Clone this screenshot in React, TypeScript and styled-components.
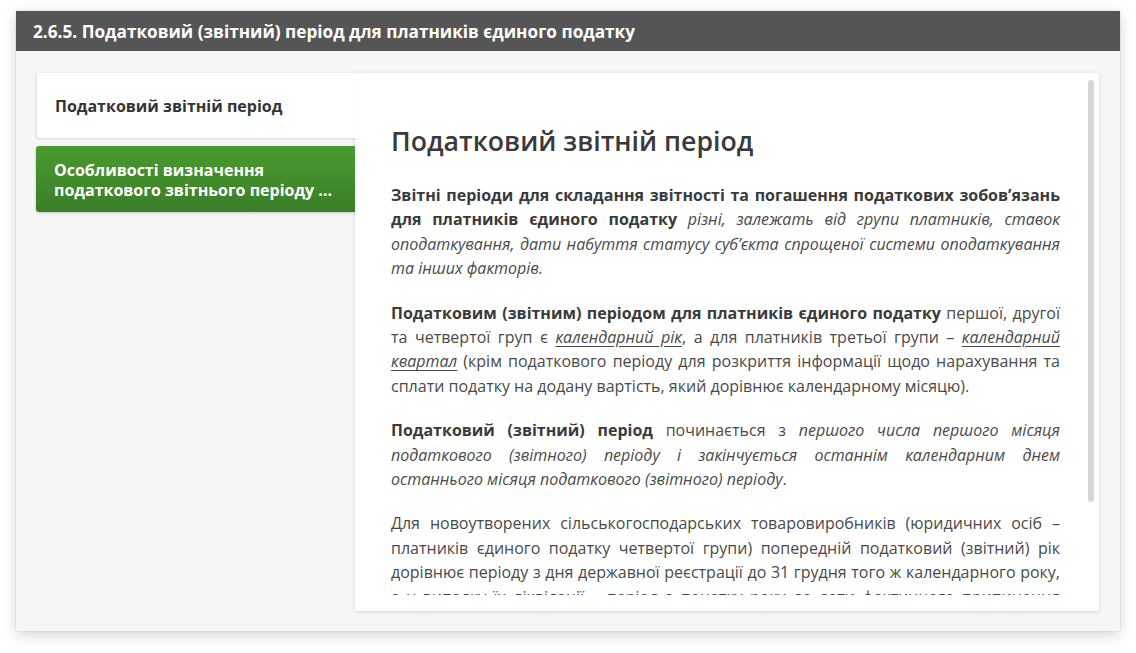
import React from "react";
import styled, { createGlobalStyle } from "styled-components";

const Global = createGlobalStyle`
  html, body { margin: 0; padding: 0; background: #fff; }
  body { font-family: "Open Sans", "Noto Sans", sans-serif; }
  * { box-sizing: border-box; }
`;

const Page = styled.div`
  padding: 11px 16px;
  width: 1136px;
  height: 653px;
`;

const Card = styled.section`
  width: 1104px;
  height: 620px;
  background: #f6f6f6;
  box-shadow: 0 4px 14px rgba(0, 0, 0, 0.16), 0 0 2px rgba(0, 0, 0, 0.12);
  display: flex;
  flex-direction: column;
`;

const Header = styled.header`
  height: 40px;
  background: #555555;
  color: #fff;
  font-weight: 700;
  font-size: 17.2px;
  display: flex;
  align-items: center;
  padding: 0 17px;
`;

const Body = styled.div`
  flex: 1;
  display: flex;
  padding: 22px 21px 20px 21px;
  min-height: 0;
`;

const Tabs = styled.nav`
  width: 318px;
  flex: none;
  display: flex;
  flex-direction: column;
  gap: 8px;
  position: relative;
  z-index: 1;
`;

const Tab = styled.div<{ $active?: boolean }>`
  font-weight: 700;
  font-size: 16px;
  line-height: 20px;
  padding: ${(p) => (p.$active ? "23px 18px 22px" : "14px 18px 12px")};
  border-radius: 3px 0 0 3px;
  color: ${(p) => (p.$active ? "#333" : "#fff")};
  background: ${(p) =>
    p.$active ? "#fff" : "linear-gradient(#4a9a31, #3a7e27)"};
  box-shadow: ${(p) =>
    p.$active
      ? "-1px 1px 3px rgba(0,0,0,0.12)"
      : "0 1px 3px rgba(0,0,0,0.18)"};
  height: ${(p) => (p.$active ? "65px" : "66px")};
  margin-right: ${(p) => (p.$active ? "-4px" : "0")};
  margin-left: ${(p) => (p.$active ? "0" : "-1px")};
`;

const Panel = styled.article`
  flex: 1;
  background: #fff;
  border-radius: 0 3px 3px 3px;
  box-shadow: 0 1px 4px rgba(0, 0, 0, 0.14);
  position: relative;
  padding: 0 0 16px 0;
  display: flex;
  flex-direction: column;
  min-height: 0;
`;

const Scroll = styled.div`
  flex: 1;
  overflow: hidden;
  padding: 50px 39px 0 36px;
  color: #4a4a4a;
  font-size: 16px;
  line-height: 24.4px;
`;

const ScrollThumb = styled.div`
  position: absolute;
  top: 7px;
  right: 5px;
  width: 6px;
  height: 422px;
  border-radius: 3px;
  background: #d6d6d6;
`;

const Title = styled.h2`
  margin: 0 0 24px;
  font-size: 26.7px;
  line-height: 36px;
  font-weight: 600;
  color: #3a3a3a;
`;

const P = styled.p`
  margin: 0 0 20px;
  text-align: justify;
  hyphens: none;
`;

const B = styled.strong`
  font-weight: 700;
  color: #3a3a3a;
`;

const I = styled.em<{ $u?: boolean }>`
  font-style: italic;
  text-decoration: ${(p) => (p.$u ? "underline" : "none")};
  text-underline-offset: 3px;
`;

export default function App() {
  return (
    <>
      <Global />
      <Page>
        <Card>
          <Header>2.6.5. Податковий (звітний) період для платників єдиного податку</Header>
          <Body>
            <Tabs>
              <Tab $active>Податковий звітній період</Tab>
              <Tab>
                Особливості визначення
                <br />
                податкового звітнього періоду ...
              </Tab>
            </Tabs>
            <Panel>
              <Scroll>
                <Title>Податковий звітній період</Title>
                <P>
                  <B>
                    Звітні періоди для складання звітності та погашення податкових
                    зобов’язань для платників єдиного податку
                  </B>{" "}
                  <I>
                    різні, залежать від групи платників, ставок оподаткування, дати
                    набуття статусу суб’єкта спрощеної системи оподаткування та інших
                    факторів.
                  </I>
                </P>
                <P>
                  <B>Податковим (звітним) періодом для платників єдиного податку</B>{" "}
                  першої, другої та четвертої груп є <I $u>календарний рік</I>, а для
                  платників третьої групи – <I $u>календарний квартал</I> (крім
                  податкового періоду для розкриття інформації щодо нарахування та
                  сплати податку на додану вартість, який дорівнює календарному
                  місяцю).
                </P>
                <P>
                  <B>Податковий (звітний) період</B> починається з{" "}
                  <I>
                    першого числа першого місяця податкового (звітного) періоду і
                    закінчується останнім календарним днем останнього місяця
                    податкового (звітного) періоду
                  </I>
                  .
                </P>
                <P>
                  Для новоутворених сільськогосподарських товаровиробників (юридичних
                  осіб – платників єдиного податку четвертої групи) попередній
                  податковий (звітний) рік дорівнює періоду з дня державної реєстрації
                  до 31 грудня того ж календарного року, а у випадку їх ліквідації –
                  період з початку року до дати фактичного припинення діяльності
                  платника податку.
                </P>
              </Scroll>
              <ScrollThumb />
            </Panel>
          </Body>
        </Card>
      </Page>
    </>
  );
}
